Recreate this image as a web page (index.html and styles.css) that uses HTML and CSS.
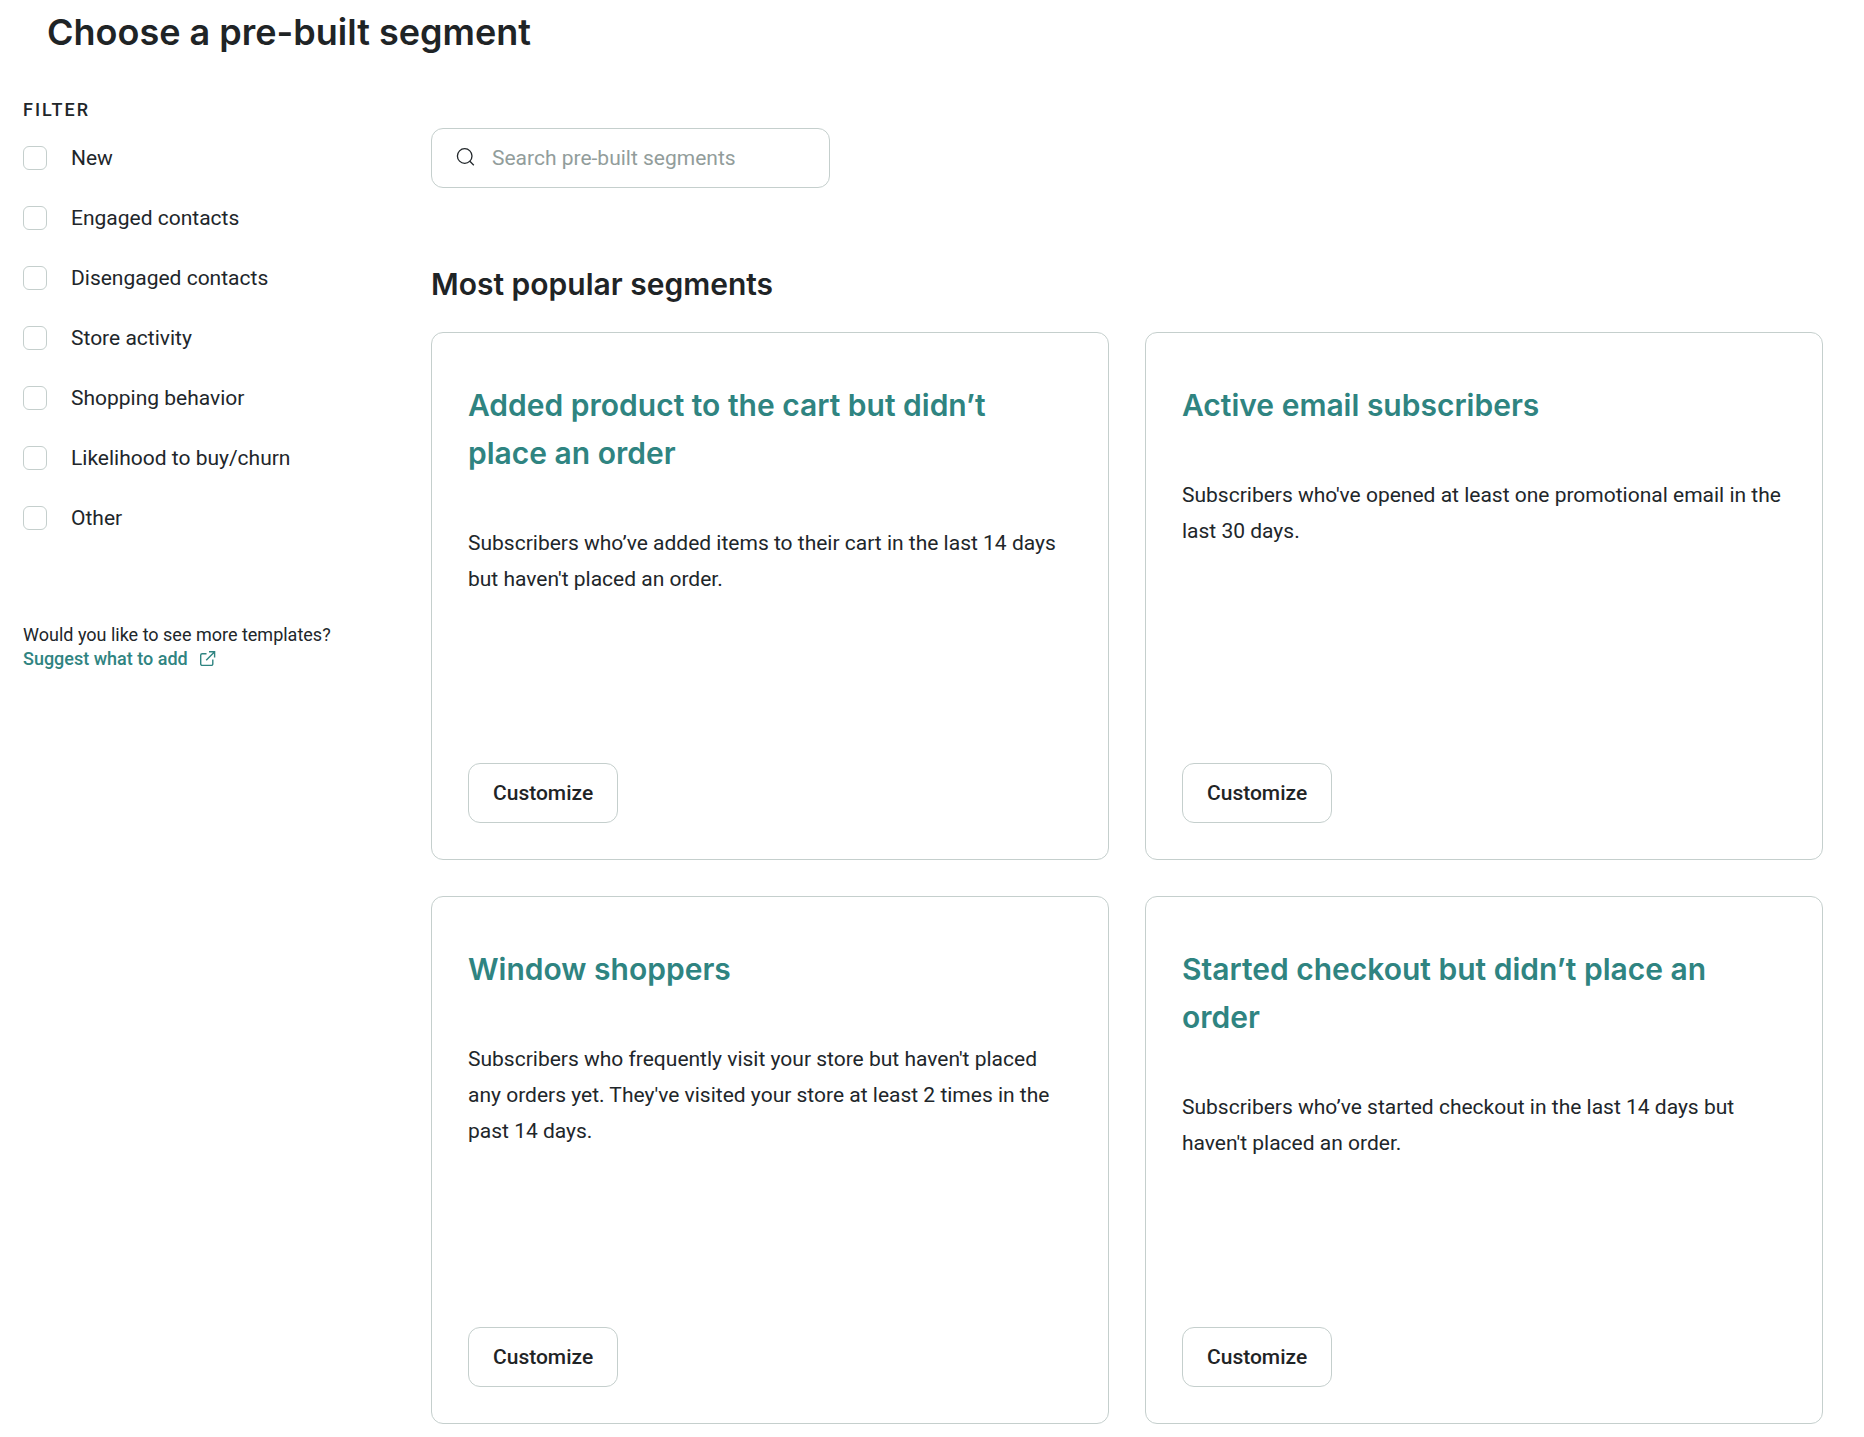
FILE: index.html
```html
<!DOCTYPE html>
<html lang="en">
  <head>
    <meta charset="UTF-8" />
    <meta name="viewport" content="width=device-width, initial-scale=1.0" />
    <title>Choose a pre-built segment</title>
    <link rel="stylesheet" href="styles.css">
  </head>
  <body>
    <header class="page-header">
      <h1>Choose a pre-built segment</h1>
    </header>

    <div class="layout">
      <aside class="sidebar">
        <fieldset class="filters">
          <legend>FILTER</legend>
          <label class="filter"><input type="checkbox" name="new" /> New</label>
          <label class="filter"><input type="checkbox" name="engaged" /> Engaged contacts</label>
          <label class="filter"><input type="checkbox" name="disengaged" /> Disengaged contacts</label>
          <label class="filter"><input type="checkbox" name="store" /> Store activity</label>
          <label class="filter"><input type="checkbox" name="shopping" /> Shopping behavior</label>
          <label class="filter"><input type="checkbox" name="likelihood" /> Likelihood to buy/churn</label>
          <label class="filter"><input type="checkbox" name="other" /> Other</label>
        </fieldset>

        <div class="suggest">
          <p>Would you like to see more templates?</p>
          <a href="#">
            Suggest what to add
            <svg width="18" height="18" viewBox="0 0 18 18" fill="none" stroke="currentColor" stroke-width="1.4" aria-hidden="true">
              <path d="M7.5 3.8H3.2a1.5 1.5 0 0 0-1.5 1.5v8.6a1.5 1.5 0 0 0 1.5 1.5h9.1a1.5 1.5 0 0 0 1.5-1.5V9.5" />
              <path d="M7.2 10.2 15.4 2M10 1.8h5.6v5.6" />
            </svg>
          </a>
        </div>
      </aside>

      <main class="content">
        <label class="search">
          <svg width="20" height="20" viewBox="0 0 20 20" fill="none" stroke="currentColor" stroke-width="1.3" aria-hidden="true">
            <circle cx="8.7" cy="8" r="7.3" />
            <path d="m13.6 13 4.2 4.2" />
          </svg>
          <input type="text" placeholder="Search pre-built segments" aria-label="Search pre-built segments" />
        </label>

        <h2>Most popular segments</h2>

        <div class="cards">
          <article class="card">
            <h3>Added product to the cart but didn’t place an order</h3>
            <p>Subscribers who’ve added items to their cart in the last 14 days but haven't placed an order.</p>
            <button type="button">Customize</button>
          </article>

          <article class="card">
            <h3>Active email subscribers</h3>
            <p>Subscribers who've opened at least one promotional email in the last 30 days.</p>
            <button type="button">Customize</button>
          </article>

          <article class="card">
            <h3>Window shoppers</h3>
            <p>Subscribers who frequently visit your store but haven't placed any orders yet. They've visited your store at least 2 times in the past 14 days.</p>
            <button type="button">Customize</button>
          </article>

          <article class="card">
            <h3>Started checkout but didn’t place an order</h3>
            <p>Subscribers who’ve started checkout in the last 14 days but haven't placed an order.</p>
            <button type="button">Customize</button>
          </article>
        </div>
      </main>
    </div>
  </body>
</html>
```

FILE: styles.css
```css
* {
  margin: 0;
  padding: 0;
  box-sizing: border-box;
}

body {
  font-family: Roboto, sans-serif;
  font-size: 21px;
  line-height: 36px;
  color: #21262a;
  background-color: #fff;
}

h1,
h2,
h3 {
  font-family: Inter, sans-serif;
  font-weight: 600;
  line-height: 48px;
  color: #1f2426;
}

h1 {
  font-size: 36px;
}

h2,
h3 {
  font-size: 30px;
}

.page-header {
  padding: 8px 47px 0;
}

.layout {
  display: flex;
  padding: 36px 41px 12px 23px;
}

.sidebar {
  flex: 0 0 408px;
}

.filters {
  border: none;
}

.filters legend {
  margin-bottom: 18px;
  font-size: 18px;
  font-weight: 500;
  line-height: 36px;
  letter-spacing: 2px;
}

.filter {
  display: flex;
  align-items: center;
  gap: 24px;
  width: fit-content;
  height: 24px;
  margin-bottom: 36px;
  cursor: pointer;
}

.filter input {
  appearance: none;
  width: 24px;
  height: 24px;
  border: 1px solid #c5cfcd;
  border-radius: 6px;
  background-color: #fff;
  cursor: pointer;
}

.filter input:checked {
  background-color: #2f8481;
  border-color: #2f8481;
}

.suggest {
  margin-top: 57px;
  font-size: 18px;
  line-height: 24px;
}

.suggest a {
  display: inline-flex;
  align-items: center;
  gap: 11px;
  font-weight: 500;
  color: #2f8481;
  text-decoration: none;
}

.content {
  flex: 1;
  min-width: 0;
  padding-top: 36px;
}

.search {
  display: flex;
  align-items: center;
  gap: 16px;
  width: 399px;
  max-width: 100%;
  height: 60px;
  padding: 0 24px;
  border: 1px solid #c5cfcd;
  border-radius: 12px;
}

.search input {
  flex: 1;
  min-width: 0;
  border: none;
  outline: none;
  font: inherit;
  color: inherit;
}

.search input::placeholder {
  color: #929d9b;
  opacity: 1;
}

.content h2 {
  margin: 72px 0 24px;
}

.cards {
  display: grid;
  grid-template-columns: repeat(auto-fit, minmax(480px, 1fr));
  gap: 36px;
}

.card {
  display: flex;
  flex-direction: column;
  align-items: flex-start;
  min-height: 528px;
  padding: 48px 36px 36px;
  border: 1px solid #c5cfcd;
  border-radius: 12px;
}

.card h3 {
  margin-bottom: 48px;
  padding-right: 24px;
  color: #2f8481;
}

.card button {
  height: 60px;
  margin-top: auto;
  padding: 0 24px;
  border: 1px solid #c5cfcd;
  border-radius: 12px;
  background-color: #fff;
  font-family: inherit;
  font-size: 21px;
  font-weight: 500;
  color: #1f2426;
  cursor: pointer;
}
```
